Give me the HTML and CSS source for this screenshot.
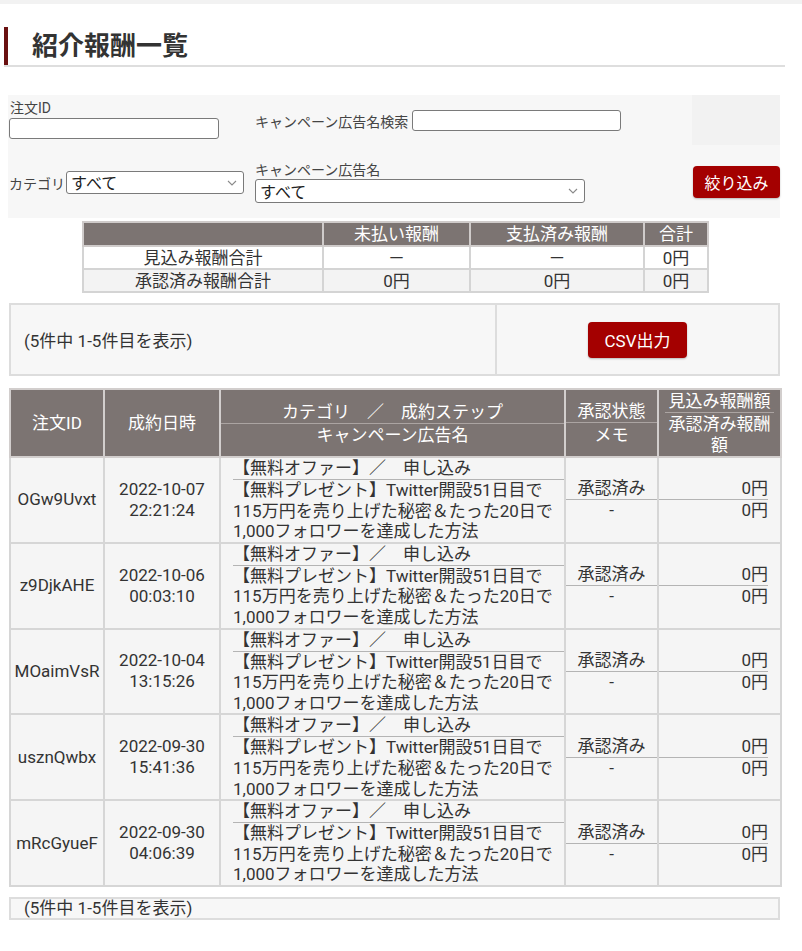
FILE: index.html
```html
<!DOCTYPE html>
<html lang="ja">
<head>
<meta charset="utf-8">
<title>紹介報酬一覧</title>
<link rel="stylesheet" href="styles.css">
</head>
<body>
<div class="topbar"></div>

<div class="page-title"><h1>紹介報酬一覧</h1></div>

<form class="filter">
  <div class="f-cell c1r1">
    <label class="lbl-block">注文ID</label>
    <input class="txt txt-id" type="text">
  </div>
  <div class="f-cell c2r1">
    <label class="lbl-inline">キャンペーン広告名検索</label>
    <input class="txt txt-camp" type="text">
  </div>
  <div class="f-cell c3r1"></div>

  <div class="f-cell c1r2">
    <label class="lbl-inline lbl-cat">カテゴリ</label>
    <div class="sel sel-cat">
      <select><option>すべて</option></select>
      <svg class="chev" viewBox="0 0 10 6" width="10" height="6"><path d="M1 1 L5 5 L9 1" fill="none" stroke="#8a8a8a" stroke-width="1.1"/></svg>
    </div>
  </div>
  <div class="f-cell c2r2">
    <label class="lbl-block lbl-camp">キャンペーン広告名</label>
    <div class="sel sel-camp">
      <select><option>すべて</option></select>
      <svg class="chev" viewBox="0 0 10 6" width="10" height="6"><path d="M1 1 L5 5 L9 1" fill="none" stroke="#8a8a8a" stroke-width="1.1"/></svg>
    </div>
  </div>
  <div class="f-cell c3r2">
    <button type="button" class="btn btn-filter">絞り込み</button>
  </div>
</form>

<table class="summary">
  <colgroup><col class="s1"><col class="s2"><col class="s3"><col class="s4"></colgroup>
  <thead>
    <tr><th></th><th>未払い報酬</th><th>支払済み報酬</th><th>合計</th></tr>
  </thead>
  <tbody>
    <tr><td>見込み報酬合計</td><td>－</td><td>－</td><td>0円</td></tr>
    <tr class="alt"><td>承認済み報酬合計</td><td>0円</td><td>0円</td><td>0円</td></tr>
  </tbody>
</table>

<div class="csvbox">
  <div class="csv-count">(5件中 1-5件目を表示)</div>
  <div class="csv-action"><button type="button" class="btn btn-csv">CSV出力</button></div>
</div>

<table class="list">
  <colgroup><col class="l1"><col class="l2"><col class="l3"><col class="l4"><col class="l5"></colgroup>
  <thead>
    <tr>
      <th>注文ID</th>
      <th>成約日時</th>
      <th class="th-split th-cat"><div class="th-top">カテゴリ　／　成約ステップ</div><div class="th-bot">キャンペーン広告名</div></th>
      <th class="th-split th-st"><div class="th-top">承認状態</div><div class="th-bot">メモ</div></th>
      <th class="th-split th-amt"><div class="th-top">見込み報酬額</div><div class="th-bot">承認済み報酬額</div></th>
    </tr>
  </thead>
  <tbody>
    <tr>
      <td class="c-id">OGw9Uvxt</td>
      <td class="c-date">2022-10-07<br>22:21:24</td>
      <td class="c-cat"><div class="step">【無料オファー】／　申し込み</div><div class="name">【無料プレゼント】Twitter開設51日目で<br>115万円を売り上げた秘密＆たった20日で<br>1,000フォロワーを達成した方法</div></td>
      <td class="c-st"><div class="st-top">承認済み</div><div class="st-bot">-</div></td>
      <td class="c-amt"><div class="st-top">0円</div><div class="st-bot">0円</div></td>
    </tr>
    <tr>
      <td class="c-id">z9DjkAHE</td>
      <td class="c-date">2022-10-06<br>00:03:10</td>
      <td class="c-cat"><div class="step">【無料オファー】／　申し込み</div><div class="name">【無料プレゼント】Twitter開設51日目で<br>115万円を売り上げた秘密＆たった20日で<br>1,000フォロワーを達成した方法</div></td>
      <td class="c-st"><div class="st-top">承認済み</div><div class="st-bot">-</div></td>
      <td class="c-amt"><div class="st-top">0円</div><div class="st-bot">0円</div></td>
    </tr>
    <tr>
      <td class="c-id">MOaimVsR</td>
      <td class="c-date">2022-10-04<br>13:15:26</td>
      <td class="c-cat"><div class="step">【無料オファー】／　申し込み</div><div class="name">【無料プレゼント】Twitter開設51日目で<br>115万円を売り上げた秘密＆たった20日で<br>1,000フォロワーを達成した方法</div></td>
      <td class="c-st"><div class="st-top">承認済み</div><div class="st-bot">-</div></td>
      <td class="c-amt"><div class="st-top">0円</div><div class="st-bot">0円</div></td>
    </tr>
    <tr>
      <td class="c-id">usznQwbx</td>
      <td class="c-date">2022-09-30<br>15:41:36</td>
      <td class="c-cat"><div class="step">【無料オファー】／　申し込み</div><div class="name">【無料プレゼント】Twitter開設51日目で<br>115万円を売り上げた秘密＆たった20日で<br>1,000フォロワーを達成した方法</div></td>
      <td class="c-st"><div class="st-top">承認済み</div><div class="st-bot">-</div></td>
      <td class="c-amt"><div class="st-top">0円</div><div class="st-bot">0円</div></td>
    </tr>
    <tr>
      <td class="c-id">mRcGyueF</td>
      <td class="c-date">2022-09-30<br>04:06:39</td>
      <td class="c-cat"><div class="step">【無料オファー】／　申し込み</div><div class="name">【無料プレゼント】Twitter開設51日目で<br>115万円を売り上げた秘密＆たった20日で<br>1,000フォロワーを達成した方法</div></td>
      <td class="c-st"><div class="st-top">承認済み</div><div class="st-bot">-</div></td>
      <td class="c-amt"><div class="st-top">0円</div><div class="st-bot">0円</div></td>
    </tr>
  </tbody>
</table>

<div class="footbox">(5件中 1-5件目を表示)</div>
</body>
</html>
```

FILE: styles.css
```css
* { box-sizing: border-box; }

html, body {
  margin: 0;
  padding: 0;
  background: #ffffff;
}

body {
  font-family: Roboto, "Noto Sans CJK JP", sans-serif;
  font-size: 17px;
  color: #333333;
  width: 802px;
}

.topbar {
  height: 4px;
  background: #f2f2f2;
}

/* title */
.page-title {
  margin: 23px 17px 0 4px;
  border-bottom: 2px solid #dedede;
}
.page-title h1 {
  margin: 0;
  height: 38px;
  line-height: 38px;
  padding-left: 24px;
  border-left: 4px solid #6a1111;
  font-size: 26px;
  font-weight: bold;
  color: #333333;
}

/* filter */
.filter {
  margin: 28px 22px 0 8px;
  background: #f7f7f7;
  display: grid;
  grid-template-columns: 247px 437px 88px;
  grid-template-rows: 55px 68px;
}
.f-cell { font-size: 14px; color: #444; }
.lbl-block { display: block; line-height: 16px; }
.lbl-inline { white-space: nowrap; }

.c1r1 { padding: 5px 0 0 1px; }
.c1r1 .lbl-block { padding-left: 1px; }
.txt {
  display: block;
  height: 21px;
  border: 1px solid #7a7a7a;
  border-radius: 3px;
  background: #fff;
  padding: 0 4px;
  font-family: inherit;
}
.txt-id { width: 210px; margin-top: 2px; }

.c2r1 {
  display: flex;
  align-items: center;
  align-self: start;
  padding-top: 15px;
}
.c2r1 .lbl-inline { width: 157px; }
.txt-camp { width: 209px; }

.c3r1 { background: #f2f2f2; height: 50px; }

.c1r2 {
  display: flex;
  align-items: center;
  align-self: start;
  padding: 21px 0 0 1px;
}
.lbl-cat { width: 57px; }

.c2r2 { padding-top: 12px; }
.lbl-camp { line-height: 17px; }

.sel { position: relative; width: max-content; }
.sel select {
  display: block;
  appearance: none;
  -webkit-appearance: none;
  border: 1px solid #7a7a7a;
  border-radius: 3px;
  background: #fff;
  font-family: "Noto Sans CJK JP", sans-serif;
  font-size: 16px;
  color: #222;
  padding: 0 0 0 4px;
  margin: 0;
}
.sel-cat select { width: 178px; height: 23px; line-height: 21px; }
.sel-camp select { width: 330px; height: 24px; line-height: 22px; }
.sel .chev {
  position: absolute;
  right: 7px;
  top: 50%;
  margin-top: -3px;
  pointer-events: none;
}

.c3r2 { padding: 16px 0 0 1px; }

.btn {
  border: none;
  border-radius: 4px;
  background: #a40000;
  color: #ffffff;
  font-family: Roboto, "Noto Sans CJK JP", sans-serif;
  box-shadow: 0 1px 2px rgba(0,0,0,0.25);
  padding: 0;
}
.btn-filter { width: 87px; height: 32px; font-size: 16px; }

/* summary table */
.summary {
  margin: 3px 0 0 82px;
  width: 625px;
  border-collapse: collapse;
  table-layout: fixed;
  font-size: 17px;
}
.summary col.s1 { width: 240px; }
.summary col.s2 { width: 147px; }
.summary col.s3 { width: 174px; }
.summary col.s4 { width: 64px; }
.summary th, .summary td {
  border: 2px solid #d4d4d4;
  text-align: center;
  padding: 0;
  line-height: 20px;
}
.summary th {
  background: #7c7472;
  color: #ffffff;
  font-weight: normal;
  height: 24px;
  border-color: #cfcbca;
}
.summary td { background: #ffffff; height: 23px; color: #333; }
.summary tr.alt td { background: #f3f3f3; }

/* CSV box */
.csvbox {
  margin: 10px 22px 0 9px;
  height: 73px;
  display: flex;
  border: 2px solid #dddddd;
  background: #f7f7f7;
}
.csv-count {
  flex: 0 0 486px;
  border-right: 2px solid #dddddd;
  display: flex;
  align-items: center;
  padding-left: 13px;
}
.csv-action {
  flex: 1;
  display: flex;
  align-items: center;
  justify-content: center;
}
.btn-csv { width: 99px; height: 36px; font-size: 17px; }

/* list table */
.list {
  margin: 12px 22px 0 9px;
  width: 771px;
  border-collapse: collapse;
  table-layout: fixed;
  font-size: 17px;
}
.list col.l1 { width: 94px; }
.list col.l2 { width: 116px; }
.list col.l3 { width: 345px; }
.list col.l4 { width: 93px; }
.list col.l5 { width: 123px; }

.list th {
  background: #7c7472;
  color: #ffffff;
  font-weight: normal;
  border: 2px solid #d2cecd;
  height: 68px;
  padding: 0;
  text-align: center;
  vertical-align: middle;
  line-height: 21px;
}
.th-split .th-top {
  line-height: 22px;
  border-bottom: 1px solid #aba4a2;
}
.th-split .th-bot { line-height: 22px; }
.th-cat { padding: 0 2px; }
.th-st { padding: 0 2px; }
.th-st .th-bot { line-height: 24px; }
.list th.th-amt { padding: 0 6px; vertical-align: top; }
.th-amt .th-top { line-height: 22px; }
.th-amt .th-bot { line-height: 21px; padding-top: 1px; }

.list td {
  background: #f5f5f5;
  border: 2px solid #d6d6d6;
  height: 84px;
  padding: 0;
  line-height: 21px;
  vertical-align: middle;
  color: #333;
}
.c-id { text-align: center; }
.c-date { text-align: center; }
.list td.c-cat { vertical-align: top; padding-left: 12px; }
.step {
  height: 22px;
  line-height: 21px;
  border-bottom: 1px solid #b4b4b4;
  white-space: nowrap;
}
.name { line-height: 20.6px; white-space: nowrap; }

.c-st { text-align: center; }
.list td.c-amt { text-align: right; padding-right: 12px; }
.st-top { line-height: 21px; border-bottom: 1px solid #b4b4b4; }
.st-bot { line-height: 21px; }

/* footer */
.footbox {
  margin: 10px 22px 0 9px;
  height: 23px;
  border: 2px solid #dddddd;
  background: #f7f7f7;
  padding-left: 13px;
  line-height: 19px;
}
```
